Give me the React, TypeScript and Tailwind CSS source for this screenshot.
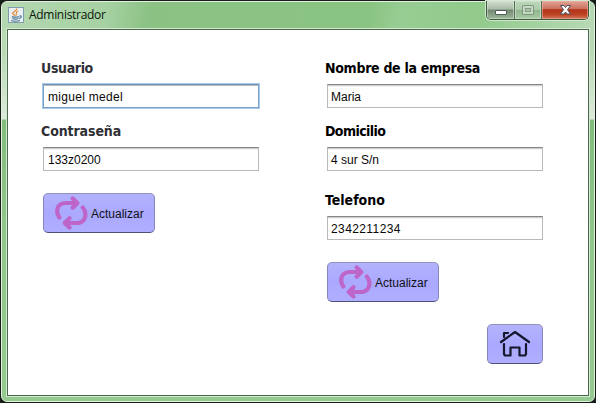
import React from "react";

function Label({ text, className }: { text: string; className: string }) {
  return (
    <div className={`h-5 whitespace-nowrap font-['DejaVu_Sans_Condensed','DejaVu_Sans',sans-serif] text-[14px] font-bold leading-5 ${className}`}>
      {text}
    </div>
  );
}

function Field({ value, focused = false, className = "" }: { value: string; focused?: boolean; className?: string }) {
  const border = focused
    ? "border-[#7d9fc3] border-t-[#7292b3] shadow-[0_0_0_1px_#a9cbea,inset_0_1px_0_#b9bdc2]"
    : "border-[#b9b9b9] border-t-[#858585] shadow-[inset_0_1px_0_#cfcfcf,inset_0_2px_0_#f2f2f2]";
  return (
    <div
      className={`flex h-6 w-[216px] items-center whitespace-nowrap border bg-white pt-px font-['Liberation_Sans',Arial,sans-serif] text-[12px] leading-4 text-[#080808] ${border} ${className}`}
    >
      {value}
    </div>
  );
}

const buttonStyle =
  "flex h-10 items-center rounded-[5px] border border-[#8585bd] border-t-[#9292bd] border-b-[#50507c] bg-gradient-to-b from-[#b3b2fc] via-[#aaa9ff] to-[#afaeff]";

function UpdateButton({ className = "" }: { className?: string }) {
  return (
    <button className={`${buttonStyle} w-28 pl-[11px] ${className}`}>
      <svg width="33" height="34" viewBox="0 0 33 34" fill="none" stroke="#bd65c9" strokeWidth="4.2" strokeLinecap="round" strokeLinejoin="round">
        <path d="M4.300 21.500C.500 16 1.500 7 11 7H21.500M17.700 2.500L22.300 7L17.700 11.800" />
        <path d="M27.800 11.500C32.500 17 31 27 21.500 27H10.500M14.500 22.200L9.700 27L14.500 31.500" />
      </svg>
      <span className="ml-[3px] mt-px font-['Liberation_Sans',Arial,sans-serif] text-[12px] leading-4 text-[#101018]">Actualizar</span>
    </button>
  );
}

function TitleBar() {
  return (
    <header className="flex h-[26px] shrink-0 items-start">
      <svg className="ml-0.5 mt-[5px] shrink-0" width="16" height="16" viewBox="0 0 16 16" fill="none">
        <rect x=".5" y=".5" width="15" height="15" fill="#e9eff3" stroke="#7f9dac" />
        <path d="M8.500 1.500C10.500 4-0 5.200 7.300 8.500M10.200 4C6.500 5.500 9.500 6.500 7.800 8.500" stroke="#e48735" strokeWidth="1.2" />
        <path d="M4 9.500C5 10.500 10 10.300 11 9.500M4.500 11.500Q7 12.600 10.500 11.500M3 13.500Q7 15 12 13.500M11.500 9C14 8.500 13.500 11 11.200 11.500" stroke="#487594" strokeWidth="1.2" />
      </svg>
      <h1 className="ml-[5px] mt-[3px] grow whitespace-nowrap font-['Open_Sans',sans-serif] text-[12px] leading-5 tracking-[-0.3px] text-[#0b160b]">
        Administrador
      </h1>
      <div className="-mt-px mr-px flex h-[19px] w-[103px] shrink-0 overflow-hidden rounded-b-[5px] border border-t-0 border-[#3e5b3e] shadow-[0_0_0_1px_#d3e7d1]">
        <div className="flex w-7 items-center justify-center border-r border-[#557155] bg-[linear-gradient(#d1ddd0_0%,#a9bda8_45%,#71876f_50%,#9cb99a_100%)] shadow-[inset_0_0_0_1px_#dce9da88]">
          <span className="mt-[5px] h-[5px] w-3 rounded-[1px] border border-[#515b58] bg-white" />
        </div>
        <div className="flex w-[27px] items-center justify-center border-r border-[#557155] bg-[linear-gradient(#bed9bd_0%,#aacba8_48%,#91b38e_50%,#a8cda5_100%)] shadow-[inset_0_0_0_1px_#dce9da88]">
          <span className="flex h-[10px] w-3 items-center justify-center rounded-[1px] border border-[#7f987e] bg-[#c3d8c2]">
            <span className="h-1 w-1.5 border border-[#829b80] bg-[#adc8ab]" />
          </span>
        </div>
        <div className="flex grow items-center justify-center bg-[linear-gradient(#e2a397_0%,#cc705d_44%,#b33319_48%,#bd4226_75%,#d37b5d_100%)] shadow-[inset_0_0_0_1px_#eeb8a888]">
          <svg width="13" height="12" viewBox="0 0 13 12">
            <path d="M1.500 1.500H5L6.500 3.500L8 1.500H11.500L8.500 5.700L11.500 10H8L6.500 8L5 10H1.500L4.500 5.700Z" fill="#fff" stroke="#4b4d58" />
          </svg>
        </div>
      </div>
    </header>
  );
}

export default function App() {
  return (
    <div className="h-[403px] w-[596px] overflow-hidden bg-[#171d17] p-px">
      <div className="flex h-[401px] w-[594px] flex-col rounded-[6px] border border-[#e2f0df] bg-[linear-gradient(#b5d8b2_0px,#b8d9b4_50px,#dceada_117px,#82bd7c_118px,#91c88b_250px,#95ca90_400px)]">
        <div className="flex grow flex-col rounded-[5px] bg-[linear-gradient(100deg,#b5d8b2_0%,#a6d1a2_18%,#8bc284_25%,#8ac482_62%,#97cd92_67%,#91ca8b_80%,#b7d9b5_100%)] bg-[length:100%_27px] bg-no-repeat px-1 pb-1">
          <TitleBar />
          <main className="flex h-[369px] w-[584px] border border-[#d7e9d4] bg-white">
            <div className="flex h-[367px] w-[582px] border border-[#49694a] pl-[33px]">
              <section className="w-[286px] pt-7">
                <Label text="Usuario" className="tracking-[-0.35px] text-[#303035]" />
                <Field value="miguel medel" focused className="ml-0.5 mt-1.5 pl-1 tracking-[0.3px]" />
                <Label text="Contraseña" className="mt-[13px] tracking-[-0.1px] text-[#303035]" />
                <Field value="133z0200" className="ml-0.5 mt-1.5 pl-1" />
                <UpdateButton className="ml-0.5 mt-[22px]" />
              </section>
              <section className="w-[216px] pt-7">
                <Label text="Nombre de la empresa" className="-ml-0.5 tracking-[-0.3px] text-black" />
                <Field value="Maria" className="mt-1.5 pl-[3px]" />
                <Label text="Domicilio" className="-ml-0.5 mt-[13px] tracking-[-0.6px] text-black" />
                <Field value="4 sur S/n" className="mt-1.5 pl-[3px]" />
                <Label text="Telefono" className="-ml-0.5 mt-[19px] text-black" />
                <Field value="2342211234" className="mt-[6px] pl-[3px] tracking-[0.4px]" />
                <UpdateButton className="mt-[22px]" />
                <button aria-label="Inicio" className={`${buttonStyle} ml-auto mt-[22px] w-14 justify-center`}>
                  <svg width="32" height="29" viewBox="0 0 32 29" fill="none" stroke="#15152b" strokeWidth="2.2" strokeLinecap="round" strokeLinejoin="round">
                    <path d="M2 12L16 2L30 12M5 14V23.500Q5 25.500 7 25.500H11.500V17.500H20.500V25.500H25Q27 25.500 27 23.500V14M5 7V3H9" />
                  </svg>
                </button>
              </section>
            </div>
          </main>
        </div>
      </div>
    </div>
  );
}
